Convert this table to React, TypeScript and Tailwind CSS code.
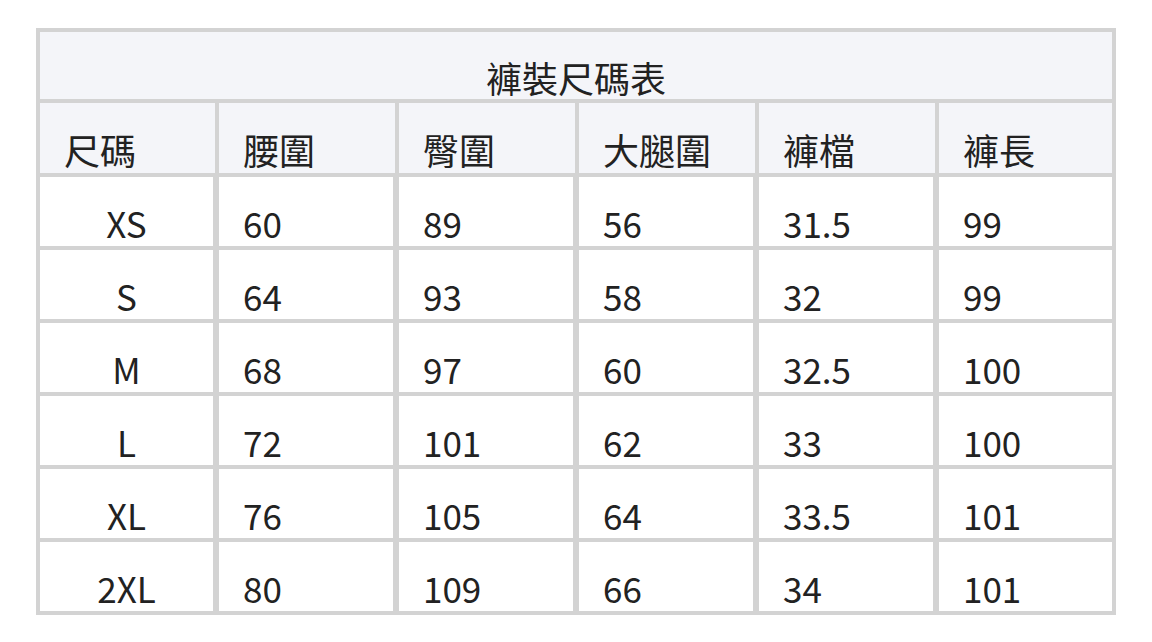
const headers = ["尺碼", "腰圍", "臀圍", "大腿圍", "褲檔", "褲長"];

const rows: string[][] = [
  ["XS", "60", "89", "56", "31.5", "99"],
  ["S", "64", "93", "58", "32", "99"],
  ["M", "68", "97", "60", "32.5", "100"],
  ["L", "72", "101", "62", "33", "100"],
  ["XL", "76", "105", "64", "33.5", "101"],
  ["2XL", "80", "109", "66", "34", "101"],
];

export default function App() {
  return (
    <div
      className="w-[1152px] h-[642px] bg-white pt-[28px] pl-[36px] text-[#222] text-[36px] leading-none"
      style={{ fontFamily: '"Noto Sans CJK TC", "Noto Sans", sans-serif' }}
    >
      <div className="w-[1080px] border-4 border-[#d3d3d3] bg-[#d3d3d3] flex flex-col gap-1">
        <div className="h-[67px] bg-[#f4f5f9] flex items-end justify-center pb-[4px]">
          褲裝尺碼表
        </div>

        <div className="grid grid-cols-[175px_176px_176px_176px_176px_173px] gap-1">
          {headers.map((h) => (
            <div key={h} className="h-[70px] bg-[#f4f5f9] flex items-end pl-6 pb-[6px]">
              {h}
            </div>
          ))}
        </div>

        {rows.map((row) => (
          <div key={row[0]} className="grid grid-cols-[175px_176px_176px_176px_176px_173px] gap-1 text-[35px]">
            {row.map((cell, i) => (
              <div
                key={i}
                className={
                  "h-[69px] bg-white flex items-end pb-[6px] " +
                  (i === 0 ? "justify-center border-r-2 border-[#d3d3d3]" : "pl-6") +
                  (i > 0 && i < 5 ? " border-r-2 border-[#d3d3d3]" : "")
                }
              >
                {cell}
              </div>
            ))}
          </div>
        ))}
      </div>
    </div>
  );
}
